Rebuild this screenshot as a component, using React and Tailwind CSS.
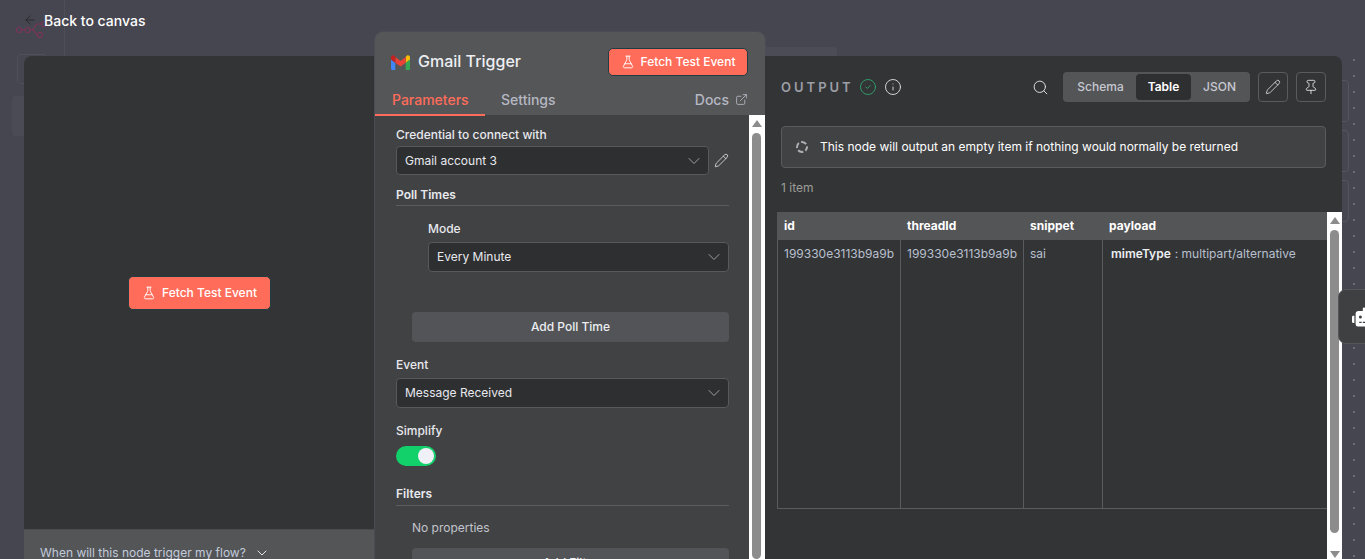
import React from "react";
import { ArrowLeft, ChevronDown, CircleCheck, ExternalLink, FlaskConical, Info, Pencil, Pin, Search } from "lucide-react";
import { FaRobot } from "react-icons/fa";

const GmailIcon = () => (
  <svg width="19" height="15" viewBox="0 0 19 15">
    <path d="M1.3 15H4.3V7.7L0 4.5V13.7C0 14.4.6 15 1.3 15Z" fill="#4285f4" />
    <path d="M14.7 15H17.7C18.4 15 19 14.4 19 13.7V4.5L14.7 7.7Z" fill="#34a853" />
    <path d="M14.7 2.1V7.7L19 4.5V2.3C19 .6 17 -.4 15.7 .7Z" fill="#fbbc04" />
    <path d="M4.3 7.7V2.1L9.5 6 14.7 2.1V7.7L9.5 11.6Z" fill="#ea4335" />
    <path d="M0 2.3V4.5L4.3 7.7V2.1L3.3 .7C2 -.4 0 .6 0 2.3Z" fill="#c5221f" />
  </svg>
);

const FaintLogo = () => (
  <svg width="34" height="22" viewBox="0 0 34 22" fill="none" stroke="#7a3558" strokeWidth="1.2">
    <circle cx="4" cy="11" r="2.5" />
    <circle cx="12.5" cy="11" r="2.5" />
    <circle cx="25" cy="16" r="2.5" />
    <circle cx="29" cy="5" r="2.5" />
    <path d="M6.5 11H10M15 11H17C20 11 19 5 23 5H26.5M17 11C20 11 19.5 15 22.5 15.5" />
  </svg>
);

const Arrow = ({ up }) => (
  <div
    className={
      up
        ? "w-0 h-0 border-x-[5px] border-x-transparent border-b-[7px] border-b-[#8c8c8c]"
        : "w-0 h-0 border-x-[5px] border-x-transparent border-t-[7px] border-t-[#8c8c8c]"
    }
  />
);

const FetchButton = ({ big }) => (
  <button
    className={
      big
        ? "flex items-center justify-center gap-[6px] w-[143px] h-[34px] rounded-[5px] bg-[#ff6d5a] border border-[#1f3d42] text-white text-[12px] font-medium"
        : "flex items-center justify-center gap-[6px] w-[140px] h-[28px] rounded-[5px] bg-[#ff6d5a] border border-[#1f3d42] text-white text-[12px] font-medium"
    }
  >
    <FlaskConical size={14} strokeWidth={1.6} />
    Fetch Test Event
  </button>
);

const Select = ({ value, className }) => (
  <div className={"flex items-center justify-between pl-2 pr-[4px] rounded bg-[#2e2f30] border border-[#58595c] text-[12px] text-[#e8e9ee] " + className}>
    {value}
    <ChevronDown size={20} strokeWidth={1} className="text-[#b5b7be]" />
  </div>
);

const Label = ({ children, className }) => (
  <div className={"h-[18px] leading-[20px] text-[12px] font-medium text-[#e8e9ee] " + className}>{children}</div>
);

const Heading = ({ children, className }) => (
  <div className={"h-[18px] leading-[20px] text-[12px] font-semibold text-[#e8e9ee] " + className}>{children}</div>
);

const GreyButton = ({ children, className }) => (
  <div className={"flex items-center justify-center h-[30px] ml-4 rounded bg-[#535457] text-[12px] font-medium text-[#eceef2] " + className}>
    {children}
  </div>
);

const Cell = ({ children }) => (
  <div className="border-l border-[#5a5b5e] px-[6px] pt-[5px] text-[12px] leading-[18px] text-[#b9c0cf] whitespace-nowrap overflow-hidden">
    {children}
  </div>
);

export default function App() {
  return (
    <div className="relative w-[1365px] h-[559px] overflow-hidden bg-[#464650] flex flex-col font-['Inter',sans-serif]">
      {/* dimmed canvas behind the modal */}
      <div className="absolute left-[64px] top-0 h-[56px] w-px bg-[#4e4e58]" />
      <div className="absolute left-[17px] top-[54px] w-[30px] h-[30px] rounded border border-[#4f4f5a]" />
      <div className="absolute left-[12px] top-[96px] w-[30px] h-[40px] rounded bg-[#4b4b56]" />
      <div className="absolute left-[760px] top-[47px] w-[77px] h-[12px] rounded-t bg-[#4c4c57]" />
      <div className="absolute left-[1342px] top-[56px] w-[23px] h-[503px] bg-[radial-gradient(circle,#6c6c78_1px,transparent_1px)] bg-[size:16px_16px] bg-[position:4px_-4px]" />
      <div className="absolute left-[1340px] top-[80px] w-[9px] h-[42px] rounded-r border border-[#55555f]" />
      <div className="absolute left-[1340px] top-[130px] w-[9px] h-[42px] rounded-r border border-[#55555f]" />
      <div className="absolute left-[1340px] top-[180px] w-[9px] h-[42px] rounded-r border border-[#55555f]" />
      <div className="absolute left-[15px] top-[19px]">
        <FaintLogo />
      </div>

      <header className="relative h-[32px] shrink-0 pl-[24px]">
        <div className="flex items-center h-[20px] mt-[10px]">
          <ArrowLeft size={14} strokeWidth={1.5} className="text-[#26262b] -mt-[1px] -ml-[1px]" />
          <span className="ml-[7px] text-[14px] font-medium text-white">Back to canvas</span>
        </div>
      </header>

      <main className="relative flex flex-1 min-h-0 pl-[24px] pr-[23px]">
        {/* input side */}
        <section className="w-[351px] mt-[24px] rounded-tl-lg bg-[#333436] flex flex-col">
          <div className="flex-1 flex items-center justify-center mt-[1px]">
            <FetchButton big />
          </div>
          <div className="h-[30px] shrink-0 bg-[#545557] border-t border-[#4a4b4d] pl-[16px] pt-[16px] flex items-center gap-[8px] text-[12px] text-[#c2cbdc] whitespace-nowrap">
            When will this node trigger my flow?
            <ChevronDown size={16} strokeWidth={1.5} className="text-[#e5e7ec]" />
          </div>
        </section>

        {/* node settings */}
        <section className="w-[390px] rounded-t-lg bg-[#555658] flex flex-col overflow-hidden shadow-[0_0_0_1px_#4b4b55]">
          <div className="h-[83px] shrink-0 relative">
            <div className="flex items-center justify-between pl-[16px] pr-[17px] pt-[16px]">
              <div className="flex items-center gap-[8px]">
                <GmailIcon />
                <span className="text-[16px] leading-[22px] -mt-[2px] font-medium text-[#eceef2]">Gmail Trigger</span>
              </div>
              <FetchButton />
            </div>
            <div className="flex items-start justify-between mt-[13px] pr-[17px] text-[14px] font-medium">
              <div className="flex">
                <div className="w-[110px] h-[27px] pl-[17px] text-[#ff6d5a] border-b-2 border-[#ff6d5a]">Parameters</div>
                <div className="ml-[16px] text-[#b5b8c2]">Settings</div>
              </div>
              <div className="flex items-center gap-[6px] text-[#b5b8c2]">
                Docs
                <ExternalLink size={13} strokeWidth={1.6} />
              </div>
            </div>
          </div>

          <div className="flex flex-1 min-h-0 bg-[#414244]">
            <div className="flex-1 overflow-hidden pl-[21px] pr-[20px] pt-[10px]">
              <Label>Credential to connect with</Label>
              <div className="flex items-center mt-[3px]">
                <Select value="Gmail account 3" className="flex-1 h-[29px]" />
                <Pencil size={15} strokeWidth={1.3} className="ml-[5px] text-[#e4e6ec]" />
              </div>
              <Heading className="mt-[10px]">Poll Times</Heading>
              <div className="mt-[2px] border-t border-[#5c5d60]" />
              <div className="ml-[32px]">
                <Label className="mt-[13px]">Mode</Label>
                <Select value="Every Minute" className="mt-[5px] h-[30px]" />
              </div>
              <GreyButton className="mt-[40px]">Add Poll Time</GreyButton>
              <Label className="mt-[13px]">Event</Label>
              <Select value="Message Received" className="mt-[5px] h-[30px]" />
              <Label className="mt-[13px]">Simplify</Label>
              <div className="flex items-center justify-end w-[40px] h-[20px] mt-[7px] pr-[2px] rounded-full bg-[#13d16a]">
                <div className="w-[16px] h-[16px] rounded-full bg-[#f0f1f7]" />
              </div>
              <Heading className="mt-[18px]">Filters</Heading>
              <div className="mt-[3px] border-t border-[#5c5d60]" />
              <div className="h-[18px] leading-[20px] mt-[12px] ml-4 text-[12px] text-[#c2c4cc]">No properties</div>
              <GreyButton className="mt-[12px]">Add Filter</GreyButton>
            </div>
            <div className="w-[16px] shrink-0 bg-white flex flex-col items-center pt-[5px] pr-[1px] overflow-hidden">
              <Arrow up />
              <div className="w-[9px] h-[500px] mt-[6px] rounded-full bg-[#8c8c8c]" />
            </div>
          </div>
        </section>

        {/* output side */}
        <section className="flex-1 mt-[24px] rounded-tr-lg bg-[#333436] flex flex-col min-w-0">
          <div className="flex items-center h-[30px] mt-[16px] pl-[16px] pr-[16px]">
            <span className="text-[13px] leading-[32px] font-semibold tracking-[3px] text-[#9c9ea6]">OUTPUT</span>
            <CircleCheck size={18} strokeWidth={1.2} className="ml-[5px] text-[#2fa56d]" />
            <Info size={18} strokeWidth={1.2} className="ml-[7px] text-[#e0e2e8]" />
            <Search size={17} strokeWidth={1.3} className="ml-auto text-[#e6e8ed]" />
            <div className="flex items-center h-[30px] ml-[14px] px-[2px] rounded bg-[#545557] text-[12px] font-medium text-[#c6c8d0]">
              <div className="w-[71px] text-center">Schema</div>
              <div className="flex items-center justify-center w-[55px] h-[26px] rounded bg-[#2e2f30] text-white font-semibold">Table</div>
              <div className="w-[57px] text-center">JSON</div>
            </div>
            <div className="flex items-center justify-center w-[30px] h-[30px] ml-[8px] rounded border border-[#5a5b5e] text-[#e6e8ed]">
              <Pencil size={16} strokeWidth={1.2} />
            </div>
            <div className="flex items-center justify-center w-[30px] h-[30px] ml-[8px] rounded border border-[#5a5b5e] text-[#e6e8ed]">
              <Pin size={16} strokeWidth={1.3} />
            </div>
          </div>

          <div className="flex items-center h-[42px] mt-[24px] mx-[16px] pl-[13px] rounded bg-[#414244] border border-[#5a5b5e] text-[12px] text-white">
            <svg width="14" height="14" viewBox="0 0 14 14" fill="none" stroke="#aeb0b6" strokeWidth="2" strokeDasharray="5.5 2.35" strokeDashoffset="1.5">
              <circle cx="7" cy="7" r="5" />
            </svg>
            <span className="ml-[11px]">This node will output an empty item if nothing would normally be returned</span>
          </div>

          <div className="h-[18px] leading-[18px] mt-[11px] ml-[16px] text-[12px] text-[#9c9e9a]">1 item</div>

          <div className="flex flex-1 min-h-0 mt-[15px] pl-[12px]">
            <div className="flex-1 min-w-0">
              <div className="grid grid-cols-[123px_123px_79px_1fr] h-[28px] items-center bg-[#545557] text-[12px] font-bold text-white">
                <div className="pl-[7px]">id</div>
                <div className="pl-[7px]">threadId</div>
                <div className="pl-[7px]">snippet</div>
                <div className="pl-[7px]">payload</div>
              </div>
              <div className="grid grid-cols-[123px_123px_79px_1fr] h-[269px] border-b border-[#5a5b5e]">
                <Cell>199330e3113b9a9b</Cell>
                <Cell>199330e3113b9a9b</Cell>
                <Cell>sai</Cell>
                <Cell>
                  <span className="ml-[2px] font-semibold text-[#eceef2]">mimeType</span>
                  <span className="ml-[4px]">:</span> multipart/alternative
                </Cell>
              </div>
            </div>
            <div className="w-[15px] shrink-0 bg-white flex flex-col items-center pt-[5px] pb-[1px]">
              <Arrow up />
              <div className="w-[9px] h-[303px] mt-[6px] rounded-full bg-[#8c8c8c]" />
              <div className="mt-auto">
                <Arrow />
              </div>
            </div>
          </div>
        </section>
      </main>

      {/* ask AI tab */}
      <div className="absolute left-[1338px] top-[289px] w-[40px] h-[55px] flex items-center pl-[13px] rounded-l-lg bg-[#3f4042] border border-[#55565a]">
        <FaRobot size={24} className="text-white shrink-0" />
      </div>
    </div>
  );
}
